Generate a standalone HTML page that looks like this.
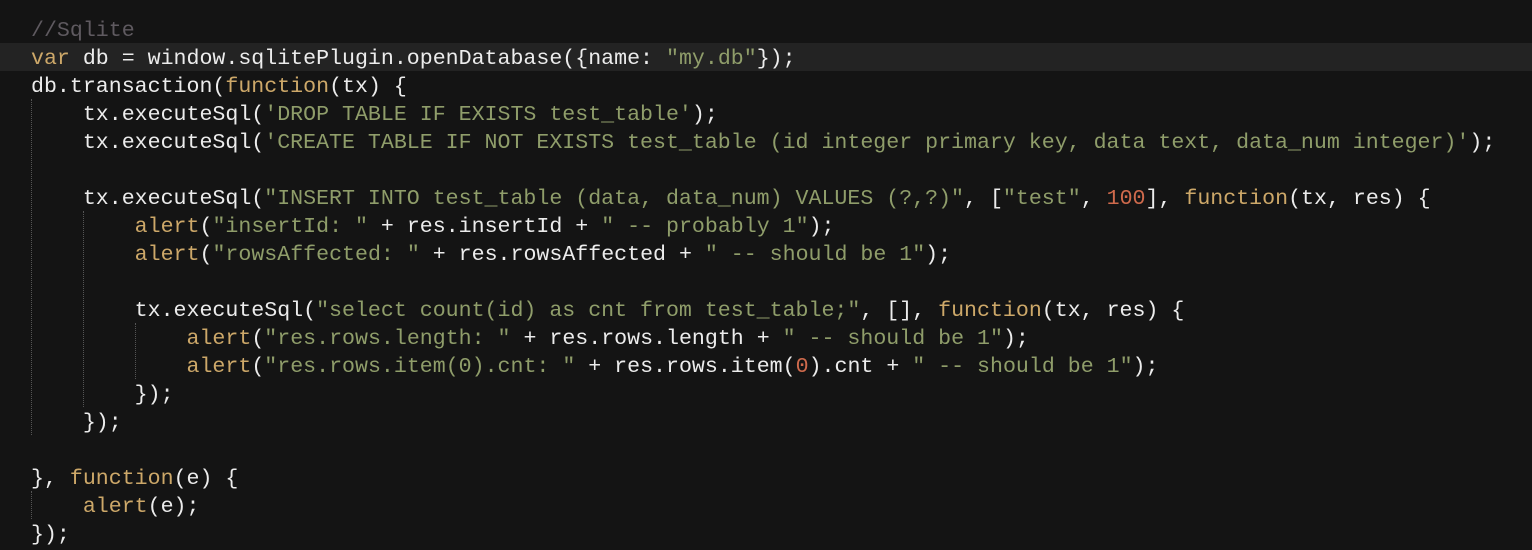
<!DOCTYPE html>
<html><head><meta charset="utf-8"><style>
html,body{margin:0;padding:0;background:#141414;width:1532px;height:550px;overflow:hidden}
.hl{position:absolute;left:0;top:43px;width:1532px;height:28px;background:#232323}
.g{position:absolute;width:0;border-left:1px dotted #555}
pre{position:absolute;left:31px;top:17px;margin:0;font-family:"Liberation Mono",monospace;font-size:21.6px;line-height:28px;color:#ececec}
.c{color:#5f5a60}.k{color:#cda869}.s{color:#8f9d6a}.n{color:#cf6a4c}
</style></head><body>
<div class="hl"></div>
<div class="g" style="left:31px;top:99px;height:336px"></div>
<div class="g" style="left:83px;top:211px;height:196px"></div>
<div class="g" style="left:135px;top:323px;height:56px"></div>
<div class="g" style="left:31px;top:491px;height:28px"></div>
<pre><span class="c">//Sqlite</span>
<span class="k">var</span> db = window.sqlitePlugin.openDatabase({name: <span class="s">"my.db"</span>});
db.transaction(<span class="k">function</span>(tx) {
    tx.executeSql(<span class="s">'DROP TABLE IF EXISTS test_table'</span>);
    tx.executeSql(<span class="s">'CREATE TABLE IF NOT EXISTS test_table (id integer primary key, data text, data_num integer)'</span>);

    tx.executeSql(<span class="s">"INSERT INTO test_table (data, data_num) VALUES (?,?)"</span>, [<span class="s">"test"</span>, <span class="n">100</span>], <span class="k">function</span>(tx, res) {
        <span class="k">alert</span>(<span class="s">"insertId: "</span> + res.insertId + <span class="s">" -- probably 1"</span>);
        <span class="k">alert</span>(<span class="s">"rowsAffected: "</span> + res.rowsAffected + <span class="s">" -- should be 1"</span>);

        tx.executeSql(<span class="s">"select count(id) as cnt from test_table;"</span>, [], <span class="k">function</span>(tx, res) {
            <span class="k">alert</span>(<span class="s">"res.rows.length: "</span> + res.rows.length + <span class="s">" -- should be 1"</span>);
            <span class="k">alert</span>(<span class="s">"res.rows.item(0).cnt: "</span> + res.rows.item(<span class="n">0</span>).cnt + <span class="s">" -- should be 1"</span>);
        });
    });

}, <span class="k">function</span>(e) {
    <span class="k">alert</span>(e);
});</pre>
</body></html>
